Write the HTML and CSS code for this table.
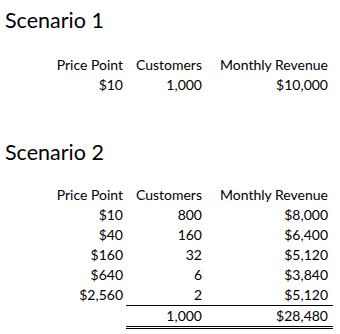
FILE: index.html
```html
<!DOCTYPE html>
<html>
<head>
<meta charset="utf-8">
<link rel="stylesheet" href="styles.css">
</head>
<body>
<div class="sheet">
  <section class="scenario first">
    <h1 class="title">Scenario 1</h1>
    <div class="grid">
      <div class="cell c1">Price Point</div><div class="cell c2">Customers</div><div class="cell c3">Monthly Revenue</div>
      <div class="cell c1">$10</div><div class="cell c2">1,000</div><div class="cell c3">$10,000</div>
    </div>
  </section>
  <section class="scenario second">
    <h1 class="title">Scenario 2</h1>
    <div class="grid">
      <div class="cell c1">Price Point</div><div class="cell c2">Customers</div><div class="cell c3">Monthly Revenue</div>
      <div class="cell c1">$10</div><div class="cell c2">800</div><div class="cell c3">$8,000</div>
      <div class="cell c1">$40</div><div class="cell c2">160</div><div class="cell c3">$6,400</div>
      <div class="cell c1">$160</div><div class="cell c2">32</div><div class="cell c3">$5,120</div>
      <div class="cell c1">$640</div><div class="cell c2">6</div><div class="cell c3">$3,840</div>
      <div class="cell c1">$2,560</div><div class="cell c2">2</div><div class="cell c3">$5,120</div>
      <div class="cell c1"></div><div class="cell c2 total">1,000</div><div class="cell c3 total">$28,480</div>
    </div>
  </section>
</div>
</body>
</html>
```

FILE: styles.css
```css
html, body {
  margin: 0;
  padding: 0;
  background: #fff;
}
body {
  width: 340px;
  height: 334px;
  overflow: hidden;
  font-family: Lato, "Open Sans", sans-serif;
  color: #000;
}
.sheet {
  padding-top: 8px;
}
.scenario.second {
  margin-top: 45px;
}
.title {
  margin: 0;
  padding-left: 5px;
  font-size: 21.5px;
  font-weight: 400;
  line-height: 24px;
}
.grid {
  display: grid;
  grid-template-columns: 126px 79px 128px;
  margin-top: 23px;
}
.second .grid {
  margin-top: 21px;
}
.cell {
  height: 20px;
  line-height: 20px;
  font-size: 14px;
  text-align: right;
  white-space: nowrap;
}
.c1 { padding-right: 3px; }
.c2 { padding-right: 3px; }
.c3 { padding-right: 5px; }
.cell.total {
  border-top: 1px solid #000;
  border-bottom: 3px double #000;
}
```
